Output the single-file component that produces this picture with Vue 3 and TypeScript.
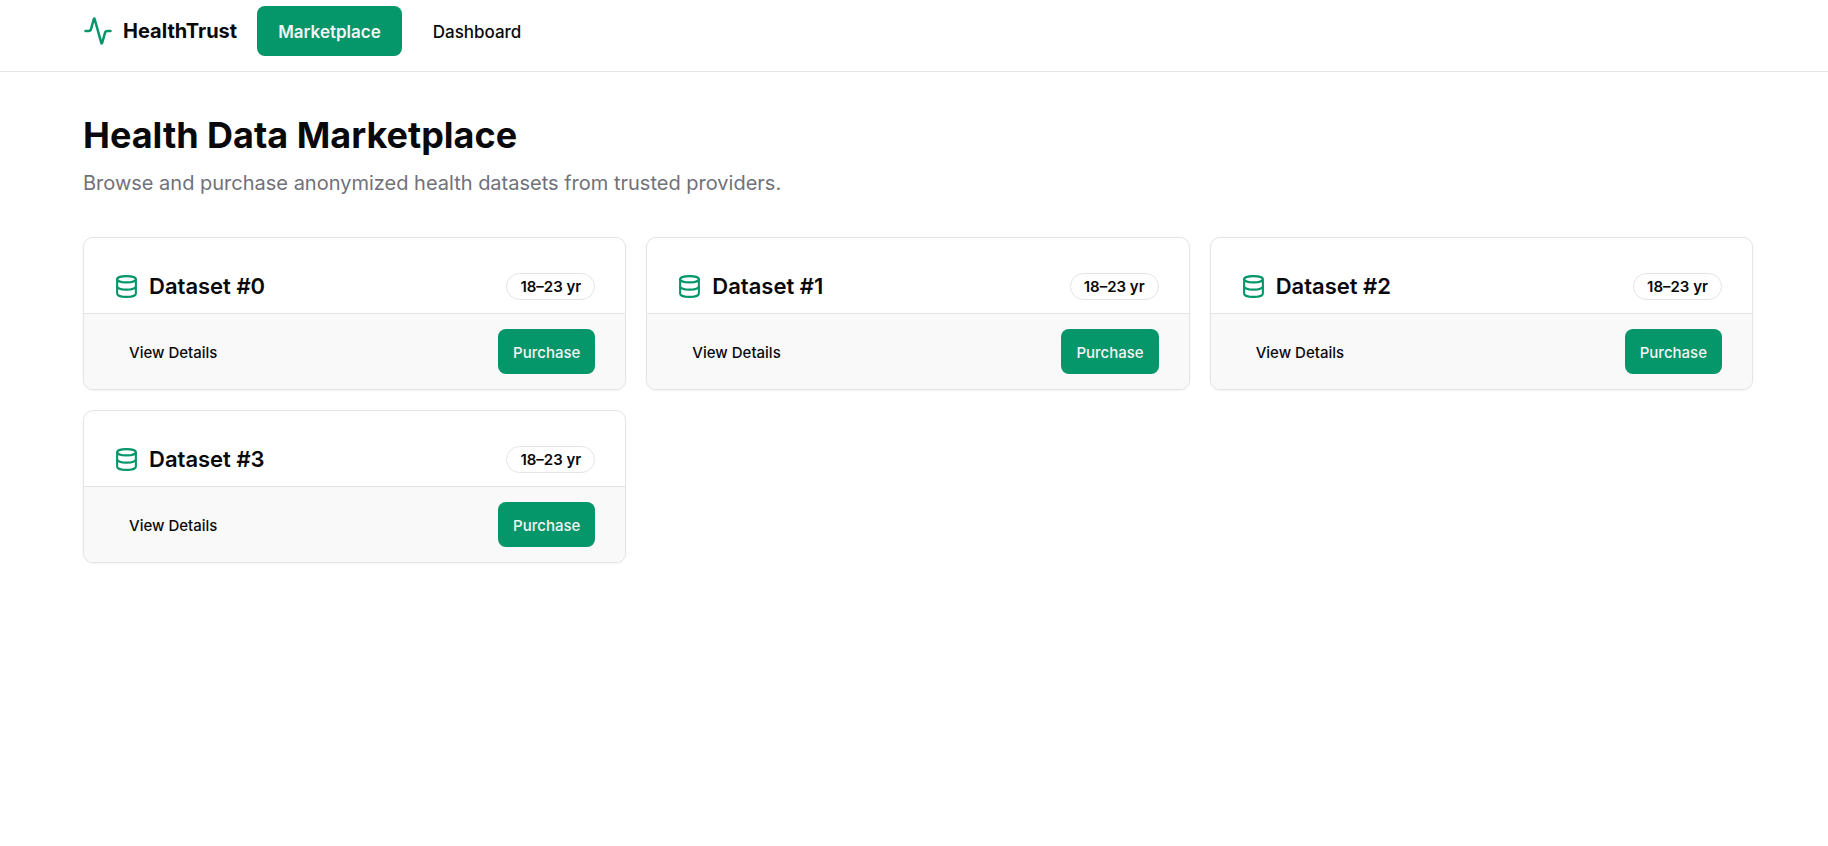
<script setup lang="ts">
interface Dataset {
  id: number
  ageRange: string
}

const datasets: Dataset[] = [
  { id: 0, ageRange: '18–23 yr' },
  { id: 1, ageRange: '18–23 yr' },
  { id: 2, ageRange: '18–23 yr' },
  { id: 3, ageRange: '18–23 yr' },
]
</script>

<template>
  <div class="page">
    <header class="topbar">
      <a class="brand" href="#">
        <svg class="brand-icon" viewBox="0 0 24 24" aria-hidden="true">
          <path d="M22 12h-2.48a2 2 0 0 0-1.93 1.46l-2.35 8.36a.25.25 0 0 1-.48 0L9.24 2.18a.25.25 0 0 0-.48 0l-2.35 8.36A2 2 0 0 1 4.49 12H2" />
        </svg>
        <span>HealthTrust</span>
      </a>
      <nav class="nav">
        <a class="nav-link active" href="#marketplace" aria-current="page">Marketplace</a>
        <a class="nav-link" href="#dashboard">Dashboard</a>
      </nav>
    </header>

    <main class="content">
      <h1 class="title">Health Data Marketplace</h1>
      <p class="subtitle">Browse and purchase anonymized health datasets from trusted providers.</p>

      <div class="grid">
        <article v-for="dataset in datasets" :key="dataset.id" class="card">
          <div class="card-head">
            <h2 class="card-title">
              <svg class="card-icon" viewBox="0 0 24 24" aria-hidden="true">
                <ellipse cx="12" cy="5" rx="9" ry="3" />
                <path d="M3 5V19A9 3 0 0 0 21 19V5" />
                <path d="M3 12A9 3 0 0 0 21 12" />
              </svg>
              <span>Dataset #{{ dataset.id }}</span>
            </h2>
            <span class="badge">{{ dataset.ageRange }}</span>
          </div>
          <div class="card-foot">
            <button class="btn" type="button">View Details</button>
            <button class="btn primary" type="button">Purchase</button>
          </div>
        </article>
      </div>
    </main>
  </div>
</template>

<style>
body {
  margin: 0;
  background: #ffffff;
}
</style>

<style scoped>
.page {
  color: #09090b;
  font-family: Inter, "Liberation Sans", sans-serif;
}

.topbar {
  display: flex;
  align-items: center;
  gap: 20px;
  padding: 6px 75px 15px 83px;
  border-bottom: 1px solid #e4e4e7;
}

.brand {
  display: flex;
  align-items: center;
  gap: 10px;
  color: inherit;
  font-size: 20px;
  font-weight: 700;
  line-height: 30px;
  text-decoration: none;
}

.brand-icon,
.card-icon {
  flex: none;
  fill: none;
  stroke: #059669;
  stroke-width: 2;
  stroke-linecap: round;
  stroke-linejoin: round;
}

.brand-icon {
  width: 30px;
  height: 30px;
}

.nav {
  display: flex;
  gap: 10px;
}

.nav-link {
  padding: 11px 21px 9px;
  border-radius: 8px;
  color: inherit;
  font-size: 17px;
  font-weight: 500;
  line-height: 30px;
  text-decoration: none;
}

.nav-link.active {
  background: #059669;
  color: #f4f4f5;
  font-weight: 600;
}

.content {
  padding: 40px 75px 40px 83px;
}

.title {
  margin: 0;
  font-size: 36px;
  font-weight: 700;
  line-height: 46px;
}

.subtitle {
  margin: 10px 0 39px;
  color: #71717a;
  font-size: 20px;
  line-height: 30px;
}

.grid {
  display: grid;
  grid-template-columns: repeat(3, minmax(0, 1fr));
  gap: 20px;
}

.card {
  overflow: hidden;
  border: 1px solid #e4e4e7;
  border-radius: 10px;
  background: #ffffff;
  box-shadow: 0 1px 2px rgba(0, 0, 0, 0.05);
}

.card-head {
  display: flex;
  align-items: center;
  justify-content: space-between;
  padding: 30px 30px 9px;
}

.card-title {
  display: flex;
  align-items: center;
  gap: 10px;
  margin: 0;
  font-size: 22px;
  font-weight: 600;
  line-height: 36px;
}

.card-icon {
  width: 25px;
  height: 25px;
}

.badge {
  padding: 3px 13px;
  border: 1px solid #e4e4e7;
  border-radius: 14px;
  font-size: 15px;
  font-weight: 600;
  line-height: 19px;
}

.card-foot {
  display: flex;
  align-items: center;
  justify-content: space-between;
  padding: 15px 30px;
  border-top: 1px solid #e4e4e7;
  background: #f9f9f9;
}

.btn {
  padding: 11px 15px 9px;
  border: 0;
  border-radius: 8px;
  background: transparent;
  color: inherit;
  font-family: inherit;
  font-size: 15px;
  font-weight: 500;
  line-height: 25px;
  cursor: pointer;
}

.btn.primary {
  background: #059669;
  color: #f4f4f5;
}
</style>
